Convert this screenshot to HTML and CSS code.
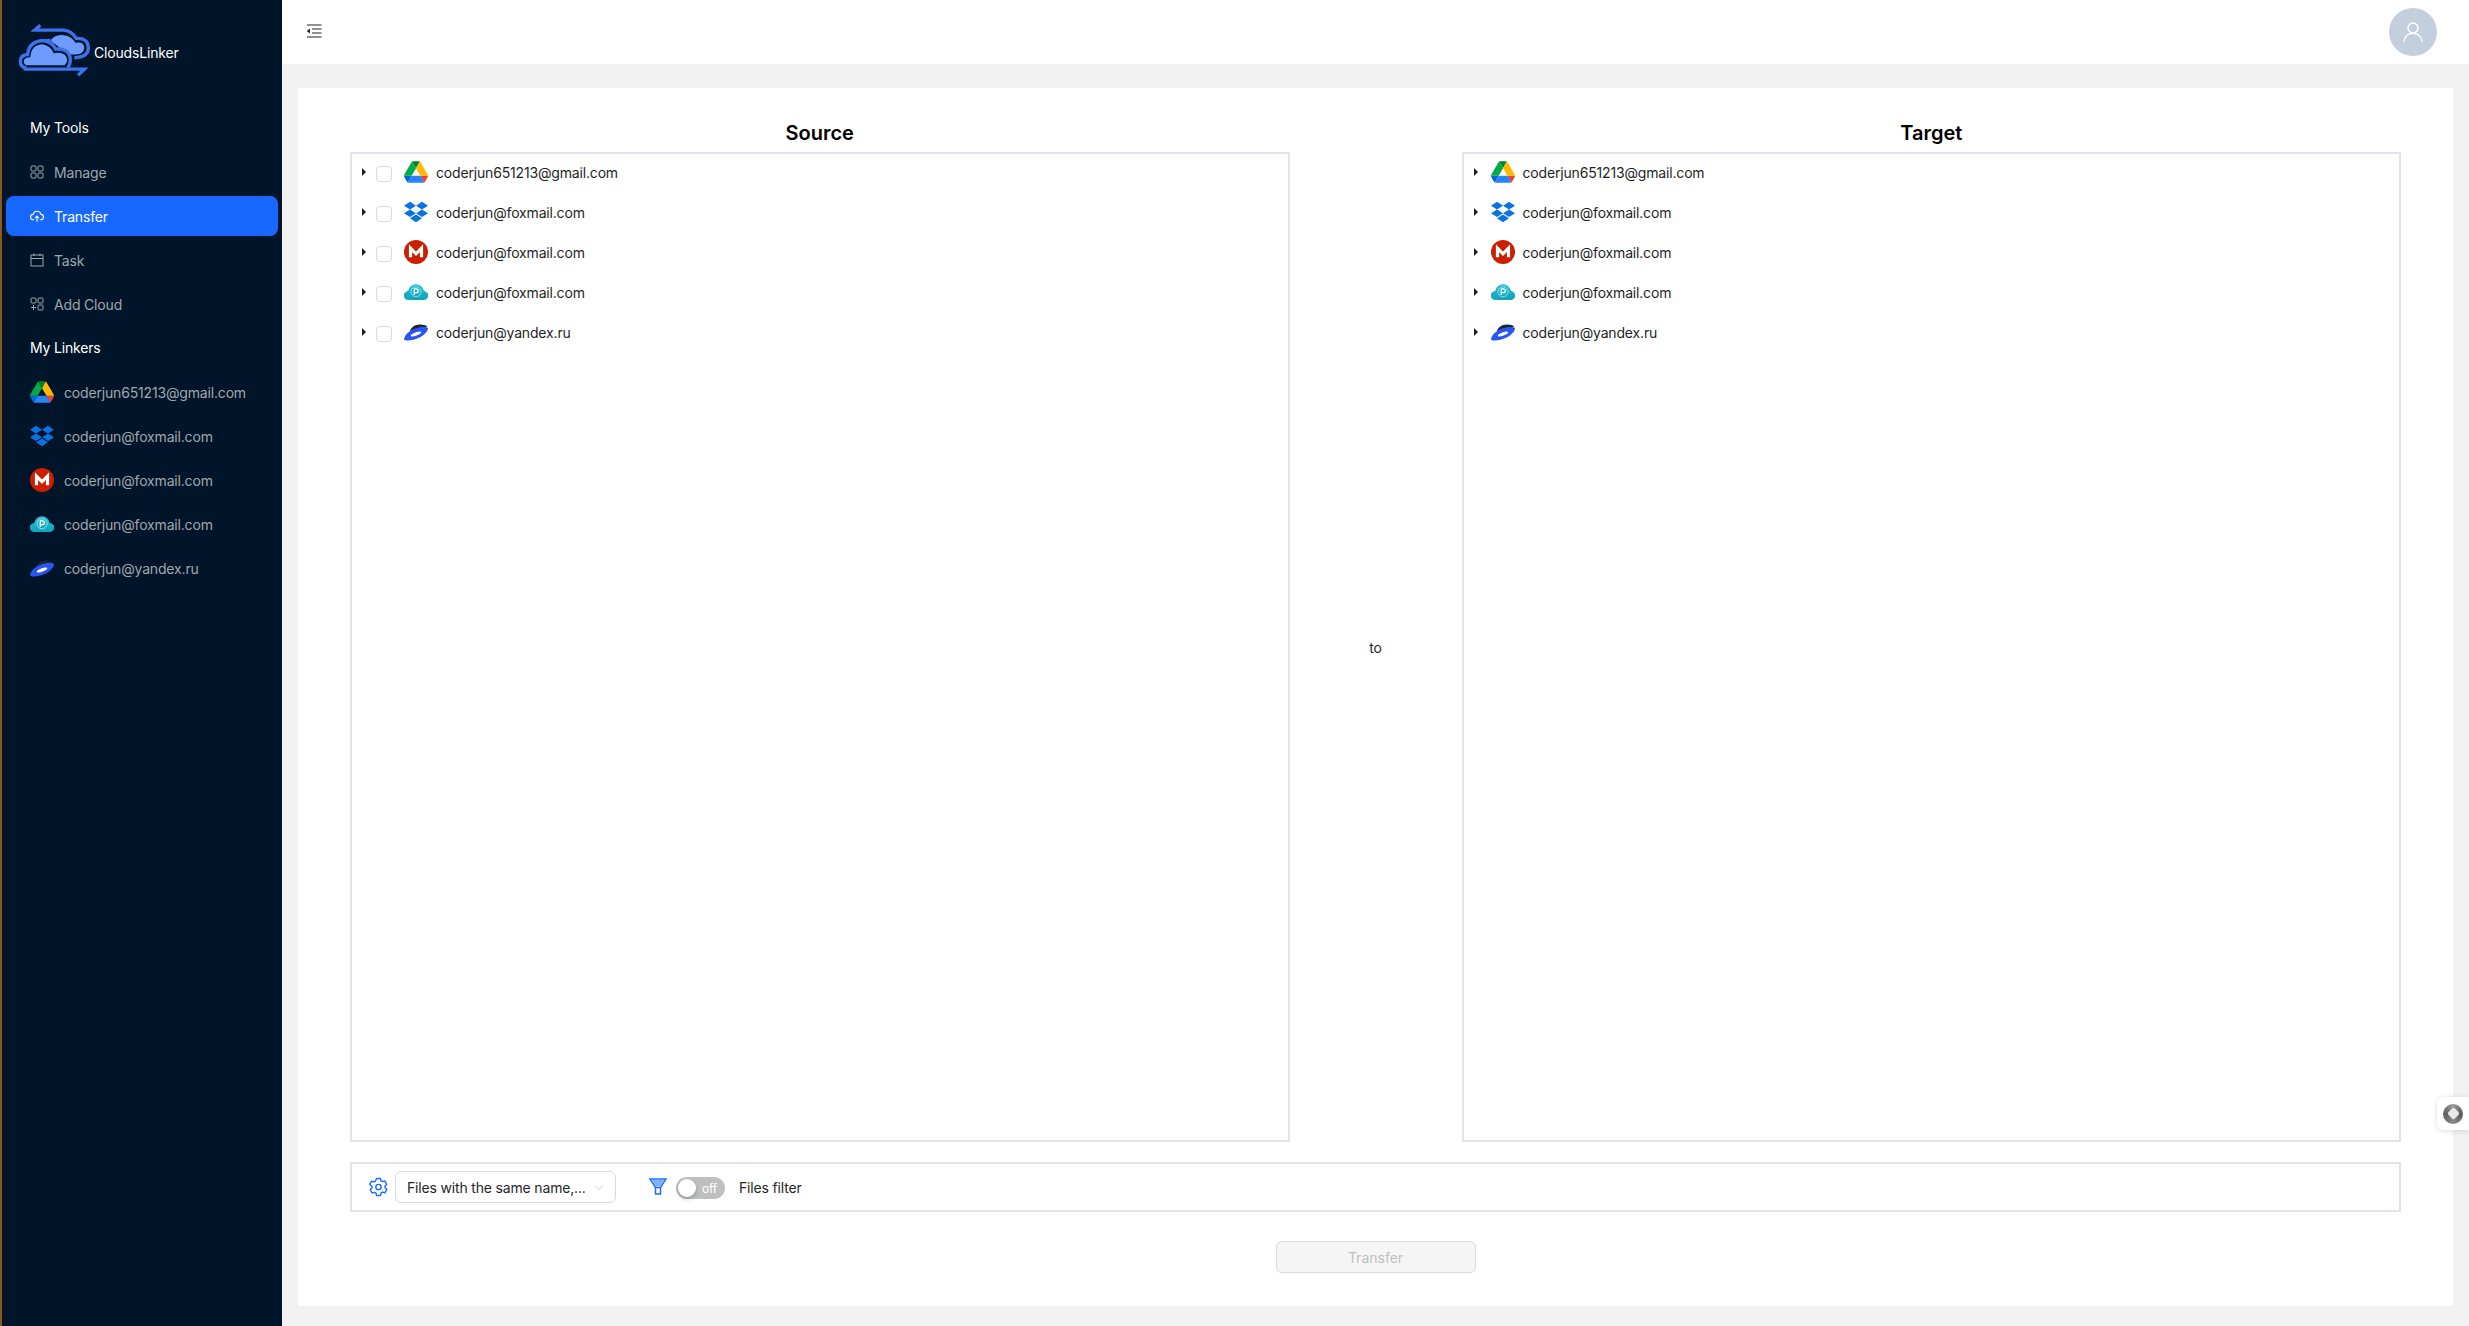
FILE: index.html
```html
<!DOCTYPE html>
<html lang="en">
<head>
<meta charset="utf-8">
<title>CloudsLinker</title>
<link rel="stylesheet" href="styles.css">
</head>
<body>
<svg class="defs" width="0" height="0" aria-hidden="true">
  <defs>
    <linearGradient id="pc-grad" x1="0" y1="0" x2="0" y2="1">
      <stop offset="0" stop-color="#25c2d8"/>
      <stop offset="1" stop-color="#0fa3b8"/>
    </linearGradient>
    <symbol id="i-drive" viewBox="0 0 87.3 78">
      <path d="m6.6 66.85 3.85 6.65c.8 1.4 1.95 2.5 3.3 3.3l13.75-23.8h-27.5c0 1.55.4 3.1 1.2 4.5z" fill="#0066da"/>
      <path d="m43.65 25-13.75-23.8c-1.35.8-2.5 1.9-3.3 3.3l-25.4 44a9.06 9.06 0 0 0 -1.2 4.5h27.5z" fill="#00ac47"/>
      <path d="m73.55 76.8c1.35-.8 2.5-1.9 3.3-3.3l1.6-2.75 7.65-13.25c.8-1.4 1.2-2.95 1.2-4.5h-27.502l5.852 11.5z" fill="#ea4335"/>
      <path d="m43.65 25 13.75-23.8c-1.35-.8-2.9-1.2-4.5-1.2h-18.5c-1.6 0-3.15.45-4.5 1.2z" fill="#00832d"/>
      <path d="m59.8 53h-32.3l-13.75 23.8c1.35.8 2.9 1.2 4.5 1.2h50.8c1.6 0 3.15-.45 4.5-1.2z" fill="#2684fc"/>
      <path d="m73.4 26.5-12.7-22c-.8-1.4-1.95-2.5-3.3-3.3l-13.75 23.8 16.15 28h27.45c0-1.55-.4-3.1-1.2-4.5z" fill="#ffba00"/>
    </symbol>
    <symbol id="i-dropbox" viewBox="0 0 24 24">
      <path d="M6 1.807 0 5.629l6 3.822 6.001-3.822zm12 0-6 3.822 6 3.822 6-3.822zM0 13.274l6 3.822 6.001-3.822L6 9.452zm18-3.822-6 3.822 6 3.822 6-3.822zM6 18.371l6.001 3.822 6-3.822-6-3.822z" fill="#0a72e2"/>
    </symbol>
    <symbol id="i-mega" viewBox="0 0 24 24">
      <circle cx="12" cy="12" r="12" fill="#cc1f00"/>
      <path d="M6.500 17.200V8.200l5.500 5.600 5.500-5.600v9" fill="none" stroke="#fff" stroke-width="3.200"/>
    </symbol>
    <symbol id="i-pcloud" viewBox="0 0 24 24">
      <path d="M4.500 20a4.500 4.500 0 0 1-.4-9 8 8 0 0 1 15.800 0 4.500 4.500 0 0 1-.4 9z" fill="url(#pc-grad)"/>
      <circle cx="12" cy="11.700" r="5" fill="none" stroke="#d6f5fa" stroke-width=".9" stroke-dasharray="1.400 .6"/>
      <path d="M10.300 15.100V8.900h2.100a1.900 1.900 0 0 1 0 3.800h-2.100" fill="none" stroke="#fff" stroke-width="1.300"/>
    </symbol>
    <symbol id="i-yandex" viewBox="0 0 24 24">
      <path d="M6 11C7.500 7 11 4.700 15.500 4.600c3.600-.1 6.500.7 7.800 2L10 12z" fill="#1c2333"/>
      <path d="M0 19.500C.5 15 5 10.500 12 8.200c5-1.600 10-1.600 12-.2.200 2.500-2.500 6.500-8.500 9.500-6 3-13.500 3.800-15.500 2z" fill="#2856f2"/>
      <ellipse cx="12" cy="14" rx="5.500" ry="1.700" transform="rotate(-20 12 14)" fill="#fff"/>
    </symbol>
  </defs>
</svg>

<div class="app">
  <aside class="sidebar">
    <div class="brand">
      <svg class="brand-logo" viewBox="50 70 225 170" aria-hidden="true">
        <path d="M150 128Q165 110 190 112Q215 115 225 135Q250 130 252 150Q250 170 225 170H205Z" fill="#6f9bff"/>
        <path d="M120 82L103 97H190Q215 100 228 122Q264 120 264 150Q264 178 222 180" fill="none" stroke="#3d72ee" stroke-width="10"/>
        <path d="M150 125Q135 130 130 125" fill="none" stroke="#3d72ee" stroke-width="6"/>
        <path d="M78 210Q60 208 60 190Q60 172 82 170Q85 133 125 128Q155 130 166 154Q207 150 210 184Q210 200 202 210" fill="#001529" stroke="#3d72ee" stroke-width="10"/>
        <path d="M78 202Q70 198 70 190Q72 178 90 178Q92 142 125 139Q150 142 160 166Q198 160 200 186Q200 198 192 202Z" fill="#6f9bff"/>
        <path d="M70 214H252L233 232" fill="none" stroke="#3d72ee" stroke-width="10"/>
      </svg>
      <span class="brand-name">CloudsLinker</span>
    </div>
    <div class="side-title">My Tools</div>
    <nav class="nav">
      <a class="nav-item">
        <svg class="nav-icon" viewBox="0 0 14 14" aria-hidden="true"><g fill="none" stroke="currentColor" stroke-width="1"><rect x="1" y="1" width="5" height="5" rx="1"/><rect x="8" y="1" width="5" height="5" rx="1"/><rect x="1" y="8" width="5" height="5" rx="1"/><rect x="8" y="8" width="5" height="5" rx="1"/></g></svg>
        <span>Manage</span>
      </a>
      <a class="nav-item active">
        <svg class="nav-icon" viewBox="0 0 14 14" aria-hidden="true"><g fill="none" stroke="currentColor" stroke-width="1.100"><path d="M4.200 10.800H3.400a2.700 2.700 0 0 1-.3-5.400 4 4 0 0 1 7.800 0 2.700 2.700 0 0 1-.3 5.400H9.800"/><path d="M7 12.800V7.300M5.200 9 7 7.200 8.800 9"/></g></svg>
        <span>Transfer</span>
      </a>
      <a class="nav-item">
        <svg class="nav-icon" viewBox="0 0 14 14" aria-hidden="true"><g fill="none" stroke="currentColor" stroke-width="1"><rect x="1" y="2" width="12" height="11"/><path d="M1 5.500H13M4 .5V3M10 .5V3"/></g></svg>
        <span>Task</span>
      </a>
      <a class="nav-item">
        <svg class="nav-icon" viewBox="0 0 14 14" aria-hidden="true"><g fill="none" stroke="currentColor" stroke-width="1"><rect x="1" y="1" width="5" height="5" rx="1"/><rect x="8" y="1" width="5" height="5" rx="1"/><rect x="8" y="8" width="5" height="5" rx="1"/><path d="M3.500 8v5M1 10.500h5"/></g></svg>
        <span>Add Cloud</span>
      </a>
    </nav>
    <div class="side-title">My Linkers</div>
    <nav class="nav">
      <a class="nav-item linker"><svg class="cloud-icon"><use href="#i-drive"/></svg><span>coderjun651213@gmail.com</span></a>
      <a class="nav-item linker"><svg class="cloud-icon"><use href="#i-dropbox"/></svg><span>coderjun@foxmail.com</span></a>
      <a class="nav-item linker"><svg class="cloud-icon"><use href="#i-mega"/></svg><span>coderjun@foxmail.com</span></a>
      <a class="nav-item linker"><svg class="cloud-icon"><use href="#i-pcloud"/></svg><span>coderjun@foxmail.com</span></a>
      <a class="nav-item linker"><svg class="cloud-icon"><use href="#i-yandex"/></svg><span>coderjun@yandex.ru</span></a>
    </nav>
  </aside>

  <div class="main">
    <header class="topbar">
      <svg class="fold-icon" viewBox="0 0 16 14" aria-hidden="true"><path d="M1 1H15.500M6 5H15.500M6 9H15.500M1 13H15.500" stroke="#222" stroke-width="1.200" fill="none"/><path d="M4 4.500V9.500L.8 7z" fill="#222"/></svg>
      <div class="avatar">
        <svg viewBox="0 0 24 24" width="24" height="24" aria-hidden="true"><g fill="none" stroke="#fff" stroke-width="1.500"><circle cx="12" cy="8" r="5"/><path d="M2.800 22c.6-5 4-8.800 9.200-8.800s8.600 3.800 9.200 8.800"/></g></svg>
      </div>
    </header>

    <section class="content">
      <div class="card">
        <div class="panels">
          <div class="panel-col">
            <h2 class="panel-title">Source</h2>
            <div class="tree">
              <div class="tree-row"><i class="caret"></i><i class="check"></i><svg class="cloud-icon"><use href="#i-drive"/></svg><span>coderjun651213@gmail.com</span></div>
              <div class="tree-row"><i class="caret"></i><i class="check"></i><svg class="cloud-icon"><use href="#i-dropbox"/></svg><span>coderjun@foxmail.com</span></div>
              <div class="tree-row"><i class="caret"></i><i class="check"></i><svg class="cloud-icon"><use href="#i-mega"/></svg><span>coderjun@foxmail.com</span></div>
              <div class="tree-row"><i class="caret"></i><i class="check"></i><svg class="cloud-icon"><use href="#i-pcloud"/></svg><span>coderjun@foxmail.com</span></div>
              <div class="tree-row"><i class="caret"></i><i class="check"></i><svg class="cloud-icon"><use href="#i-yandex"/></svg><span>coderjun@yandex.ru</span></div>
            </div>
          </div>
          <div class="to">to</div>
          <div class="panel-col">
            <h2 class="panel-title">Target</h2>
            <div class="tree">
              <div class="tree-row"><i class="caret"></i><svg class="cloud-icon"><use href="#i-drive"/></svg><span>coderjun651213@gmail.com</span></div>
              <div class="tree-row"><i class="caret"></i><svg class="cloud-icon"><use href="#i-dropbox"/></svg><span>coderjun@foxmail.com</span></div>
              <div class="tree-row"><i class="caret"></i><svg class="cloud-icon"><use href="#i-mega"/></svg><span>coderjun@foxmail.com</span></div>
              <div class="tree-row"><i class="caret"></i><svg class="cloud-icon"><use href="#i-pcloud"/></svg><span>coderjun@foxmail.com</span></div>
              <div class="tree-row"><i class="caret"></i><svg class="cloud-icon"><use href="#i-yandex"/></svg><span>coderjun@yandex.ru</span></div>
            </div>
          </div>
        </div>

        <div class="options">
          <svg class="gear" viewBox="0 0 20 20" aria-hidden="true"><g fill="none" stroke="#1a6dff" stroke-width="1.500" stroke-linejoin="round"><path d="M8 1h4l.7 2.500 1.500.9 2.500-.7 2 3.400-1.800 1.900v1.800l1.800 1.900-2 3.400-2.500-.7-1.500.9L12 19H8l-.7-2.500-1.500-.9-2.500.7-2-3.400 1.800-1.900V9.200L.8 7.300l2-3.400 2.500.7 1.500-.9z"/><circle cx="10" cy="10" r="2.800"/></g></svg>
          <div class="select"><span class="select-text">Files with the same name,...</span>
            <svg class="chev" viewBox="0 0 12 8" aria-hidden="true"><path d="M1 1.500 6 6.500 11 1.500" fill="none" stroke="#c4c4c4" stroke-width="1"/></svg>
          </div>
          <svg class="funnel" viewBox="0 0 18 17" aria-hidden="true"><path d="M1 1H17L11.500 9.500H6.500ZM6.500 9.500V16H11.500V9.500" fill="none" stroke="#1a6dff" stroke-width="1.500"/><path d="M3 2H15L11 8.500H7Z" fill="#7fb0ff"/></svg>
          <div class="switch"><i class="knob"></i><span>off</span></div>
          <span class="filter-label">Files filter</span>
        </div>

        <div class="actions"><button class="transfer" disabled>Transfer</button></div>
      </div>
    </section>
  </div>
</div>

<div class="float-widget"><i class="float-dot"></i></div>
</body>
</html>
```
FILE: styles.css
```css
* { box-sizing: border-box; }
html, body { margin: 0; height: 100%; overflow: hidden; }
body { font-family: Inter, "Noto Sans", sans-serif; font-size: 14px; letter-spacing: -0.17px; color: #1f1f1f; background: #f2f2f2; }
.defs { position: absolute; }

.app { display: flex; height: 1326px; }

.sidebar { width: 282px; flex: none; background: #001529; border-left: 2px solid #8a5a1c; color: #fff; }
.brand { display: flex; align-items: center; height: 106px; padding-left: 15px; }
.brand-logo { width: 75px; height: 57px; flex: none; margin-top: -8px; }
.brand-name { font-size: 14px; font-weight: 400; margin-left: 2px; margin-top: -2px; }
.side-title { height: 44px; line-height: 44px; padding-left: 28px; font-weight: 400; color: #fff; }
.nav { display: flex; flex-direction: column; }
.nav-item { display: flex; align-items: center; height: 44px; padding-left: 28px; color: #a0a6ad; position: relative; z-index: 0; }
.nav-item.active { color: #fff; }
.nav-item.active::before { content: ""; position: absolute; left: 4px; right: 4px; top: 2px; bottom: 2px; background: #1668ff; border-radius: 8px; z-index: -1; }
.nav-icon { width: 14px; height: 14px; margin-right: 10px; flex: none; }
.linker .cloud-icon { margin-right: 10px; }

.cloud-icon { width: 24px; height: 24px; flex: none; }

.main { flex: 1; display: flex; flex-direction: column; min-width: 0; }
.topbar { height: 64px; background: #fff; display: flex; align-items: center; justify-content: space-between; padding: 0 32px 0 24px; flex: none; }
.fold-icon { width: 16px; height: 14px; margin-top: -3px; }
.avatar { width: 48px; height: 48px; border-radius: 50%; background: #c4cfde; display: flex; align-items: center; justify-content: center; }

.content { flex: 1; padding: 24px 16px 20px; }
.card { height: 100%; background: #fff; padding: 30px 52px 33px; display: flex; flex-direction: column; }

.panels { display: grid; grid-template-columns: 1fr 172px 1fr; height: 1024px; }
.panel-col { display: flex; flex-direction: column; min-width: 0; }
.panel-title { margin: 0; height: 34px; line-height: 30px; text-align: center; font-size: 20px; font-weight: 600; letter-spacing: 0; color: #000; }
.tree { flex: 1; border: 2px solid #e2e2ea; padding: 0 10px; }
.tree-row { display: flex; align-items: center; height: 40px; padding-bottom: 4px; }
.tree-row .cloud-icon { margin-right: 8px; }
.caret { width: 0; height: 0; border-left: 4px solid #1f1f1f; border-top: 4px solid transparent; border-bottom: 4px solid transparent; margin-right: 10px; flex: none; }
.check { width: 16px; height: 16px; border: 1px solid #d9d9d9; border-radius: 4px; background: #fff; margin-right: 12px; margin-top: 4px; flex: none; }
.tree-row .caret + .cloud-icon { margin-left: 3px; }
.to { display: flex; align-items: center; justify-content: center; padding-top: 34px; color: #1f1f1f; }

.options { height: 50px; margin-top: 20px; border: 2px solid #e2e2ea; display: flex; align-items: center; padding-left: 17px; flex: none; }
.gear { width: 19px; height: 20px; flex: none; margin-right: 7px; }
.select { width: 221px; height: 32px; border: 1px solid #d9d9d9; border-radius: 6px; display: flex; align-items: center; justify-content: space-between; padding: 0 11px; color: #262626; flex: none; }
.select-text { white-space: nowrap; }
.chev { width: 10px; height: 7px; flex: none; }
.funnel { width: 18px; height: 17px; margin-left: 33px; flex: none; margin-top: -2px; }
.switch { width: 49px; height: 22px; margin-left: 9px; margin-top: 2px; background: #bfbfbf; border-radius: 11px; display: flex; align-items: center; padding-left: 2px; color: #fff; font-size: 12px; flex: none; }
.knob { width: 18px; height: 18px; border-radius: 50%; background: #fff; box-shadow: 0 2px 4px rgba(0,35,11,.25); margin-right: 6px; }
.filter-label { margin-left: 14px; color: #262626; }

.actions { display: flex; justify-content: center; margin-top: 29px; flex: none; }
.transfer { width: 200px; height: 32px; font: inherit; color: #bfbfbf; background: #f5f5f5; border: 1px solid #d9d9d9; border-radius: 6px; padding: 0; }

.float-widget { position: absolute; right: 0; top: 1097px; width: 32px; height: 33px; background: #fff; border-radius: 8px 0 0 8px; box-shadow: 0 1px 6px rgba(0,0,0,.14); display: flex; align-items: center; padding-left: 6px; }
.float-dot { width: 20px; height: 20px; border-radius: 50%; background: conic-gradient(#9a9a9a, #5a5a5a, #8a8a8a, #5e5e5e, #9a9a9a); position: relative; }
.float-dot::after { content: ""; position: absolute; left: 5.500px; top: 5.500px; width: 9px; height: 9px; background: #e8e8e8; transform: rotate(45deg); border-radius: 2px; }
```
